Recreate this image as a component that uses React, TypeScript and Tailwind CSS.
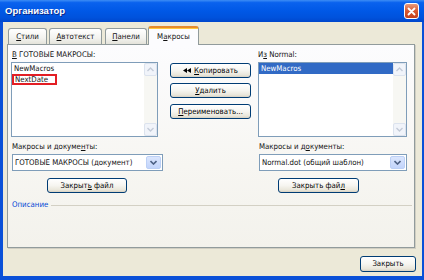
import React from 'react';

function Scrollbar() {
  return (
    <div className="w-[13px] h-full flex flex-col justify-between bg-[#f7f7f3]">
      <div className="h-[13px] rounded-[2px] border border-[#dce3ee] bg-[#f1f4fa] flex items-center justify-center">
        <svg width="7" height="5" viewBox="0 0 7 5"><path d="M0.5 4 L3.5 1 L6.5 4" fill="none" stroke="#c3cbd8" strokeWidth="1.4" /></svg>
      </div>
      <div className="h-[13px] rounded-[2px] border border-[#dce3ee] bg-[#f1f4fa] flex items-center justify-center">
        <svg width="7" height="5" viewBox="0 0 7 5"><path d="M0.5 1 L3.5 4 L6.5 1" fill="none" stroke="#c3cbd8" strokeWidth="1.4" /></svg>
      </div>
    </div>
  );
}

function XPButton({ children, className }: { children: React.ReactNode; className?: string }) {
  return (
    <div
      className={
        'h-[15px] border border-[#003c74] rounded-[3px] bg-[linear-gradient(180deg,#ffffff_0%,#f6f5f0_50%,#e9e6da_85%,#d6d0c2_100%)] flex items-center justify-center leading-none text-black ' +
        (className ?? '')
      }
    >
      {children}
    </div>
  );
}

function Combo({ text, className }: { text: string; className?: string }) {
  return (
    <div className={'h-[17px] border border-[#7f9db9] bg-white flex items-stretch ' + (className ?? '')}>
      <div className="flex-1 pl-[2px] flex items-center leading-none whitespace-nowrap overflow-hidden">{text}</div>
      <div className="w-[15px] m-[1px] rounded-[2px] border border-[#bcd0f6] bg-[linear-gradient(180deg,#dbe6fd_0%,#c2d4fb_100%)] flex items-center justify-center">
        <svg width="7" height="5" viewBox="0 0 7 5"><path d="M0.5 1 L3.5 4 L6.5 1" fill="none" stroke="#4d6185" strokeWidth="1.6" /></svg>
      </div>
    </div>
  );
}

export default function App() {
  return (
    <div className="w-[424px] h-[280px] flex flex-col bg-[#0a50d8] font-['DejaVu_Sans_Condensed','DejaVu_Sans',sans-serif] text-[7.8px] text-[#111] overflow-hidden">
      {/* title bar */}
      <div className="h-[22px] flex items-center justify-between pl-[5px] pr-[5px] bg-[linear-gradient(180deg,#3d8df5_0%,#0a62ee_12%,#0058e6_50%,#0052dc_80%,#0047cc_100%)]">
        <span className="font-['Liberation_Sans',sans-serif] font-bold text-[9.5px] text-white [text-shadow:1px_1px_0_#0a2a8a]">Организатор</span>
        <div className="w-[15px] h-[16px] rounded-[3px] border border-white bg-[linear-gradient(180deg,#e89a7c_0%,#d9582f_50%,#c4411c_100%)] flex items-center justify-center">
          <svg width="9" height="9" viewBox="0 0 9 9"><path d="M1.5 1.5 L7.5 7.5 M7.5 1.5 L1.5 7.5" stroke="#fff" strokeWidth="1.8" strokeLinecap="round" /></svg>
        </div>
      </div>

      {/* body */}
      <div className="flex-1 ml-[3px] mr-[2px] mb-[4px] bg-[#ece9d8] flex flex-col pt-[4px]">
        {/* tabs */}
        <div className="flex items-end h-[18px] pl-[5px]">
          <div className="w-[39px] h-[16px] border border-b-0 border-[#919b9c] rounded-t-[3px] bg-[linear-gradient(180deg,#ffffff_0%,#f3f3ef_60%,#e4e3da_100%)] flex items-center justify-center leading-none">
            <span><span className="underline">С</span>тили</span>
          </div>
          <div className="ml-[2px] w-[53px] h-[16px] border border-b-0 border-[#919b9c] rounded-t-[3px] bg-[linear-gradient(180deg,#ffffff_0%,#f3f3ef_60%,#e4e3da_100%)] flex items-center justify-center leading-none">
            <span><span className="underline">А</span>втотекст</span>
          </div>
          <div className="ml-[3px] w-[42px] h-[16px] border border-b-0 border-[#919b9c] rounded-t-[3px] bg-[linear-gradient(180deg,#ffffff_0%,#f3f3ef_60%,#e4e3da_100%)] flex items-center justify-center leading-none">
            <span><span className="underline">П</span>анели</span>
          </div>
          <div className="relative z-10 -mb-[1px] ml-[1px] w-[51px] h-[19px] border border-b-0 border-[#919b9c] border-t-[2px] border-t-[#e68b2c] rounded-t-[3px] bg-[#fcfcfe] flex flex-col">
            <div className="h-[1px] bg-[#ffc83c]" />
            <div className="flex-1 flex items-center justify-center leading-none">
              <span>М<span className="underline">а</span>кросы</span>
            </div>
          </div>
        </div>

        {/* tab panel */}
        <div className="ml-[4px] mr-[7px] h-[204px] border border-[#919b9c] shadow-[1px_1px_0_#d0cec2] bg-[linear-gradient(180deg,#fcfcfe_0%,#f7f6f2_60%,#f3f2ec_100%)] flex flex-col pl-[3px]">
          <div className="flex items-start">
            {/* left column */}
            <div className="w-[152px] flex flex-col">
              <div className="mt-[2px] h-[15px] leading-[15px] pl-[1px]">
                <span className="underline">В</span> ГОТОВЫЕ МАКРОСЫ:
              </div>
              <div className="w-[147px] h-[75px] border border-[#7f9db9] bg-white flex">
                <div className="flex-1 flex flex-col">
                  <div className="h-[11px] leading-[11px] pl-[2px]">NewMacros</div>
                  <div className="w-[45px] h-[11px] border-2 border-[#e31e24] leading-[7px] pl-[1px]">NextDate</div>
                </div>
                <Scrollbar />
              </div>
              <div className="mt-[3px] h-[14px] leading-[14px] pl-[1px]">
                Макросы и докуме<span className="underline">н</span>ты:
              </div>
              <Combo text="ГОТОВЫЕ МАКРОСЫ (документ)" className="ml-[1px] w-[151px]" />
              <XPButton className="mt-[7px] ml-[36px] w-[80px]">
                <span>Закрыт<span className="underline">ь</span> файл</span>
              </XPButton>
            </div>

            {/* middle buttons */}
            <div className="ml-[7px] w-[81px] pt-[18px] flex flex-col">
              <XPButton>
                <span className="flex items-center gap-[3px]">
                  <svg width="8" height="5" viewBox="0 0 8 5"><path d="M0 2.5 L4 0 L4 5 Z M4 2.5 L8 0 L8 5 Z" fill="#000" /></svg>
                  <span><span className="underline">К</span>опировать</span>
                </span>
              </XPButton>
              <XPButton className="mt-[5px]">
                <span><span className="underline">У</span>далить</span>
              </XPButton>
              <XPButton className="mt-[6px]">
                <span><span className="underline">П</span>ереименовать...</span>
              </XPButton>
            </div>

            {/* right column */}
            <div className="ml-[7px] w-[149px] flex flex-col">
              <div className="mt-[2px] h-[15px] leading-[15px]">
                И<span className="underline">з</span> Normal:
              </div>
              <div className="h-[75px] border border-[#7f9db9] bg-white flex">
                <div className="flex-1 flex flex-col">
                  <div className="h-[11px] leading-[11px] pl-[2px] bg-[#316ac5] text-white">NewMacros</div>
                </div>
                <Scrollbar />
              </div>
              <div className="mt-[3px] h-[14px] leading-[14px] pl-[1px]">
                Макросы и д<span className="underline">о</span>кументы:
              </div>
              <Combo text="Normal.dot (общий шаблон)" className="ml-[1px] w-[148px]" />
              <XPButton className="mt-[7px] ml-[20px] w-[81px]">
                <span>Закрыть фай<span className="underline">л</span></span>
              </XPButton>
            </div>
          </div>

          {/* description group */}
          <div className="mt-[5px] h-[14px] flex items-center pl-[1px] pr-[2px]">
            <span className="text-[#0046d5] leading-none">Описание</span>
            <div className="flex-1 ml-[3px] h-[1px] bg-[#d3d0c4]" />
          </div>
        </div>

        {/* bottom */}
        <div className="flex-1 flex items-end justify-end pr-[6px] pb-[4px]">
          <XPButton className="w-[56px] h-[16px]">
            <span>Закрыть</span>
          </XPButton>
        </div>
      </div>
    </div>
  );
}
